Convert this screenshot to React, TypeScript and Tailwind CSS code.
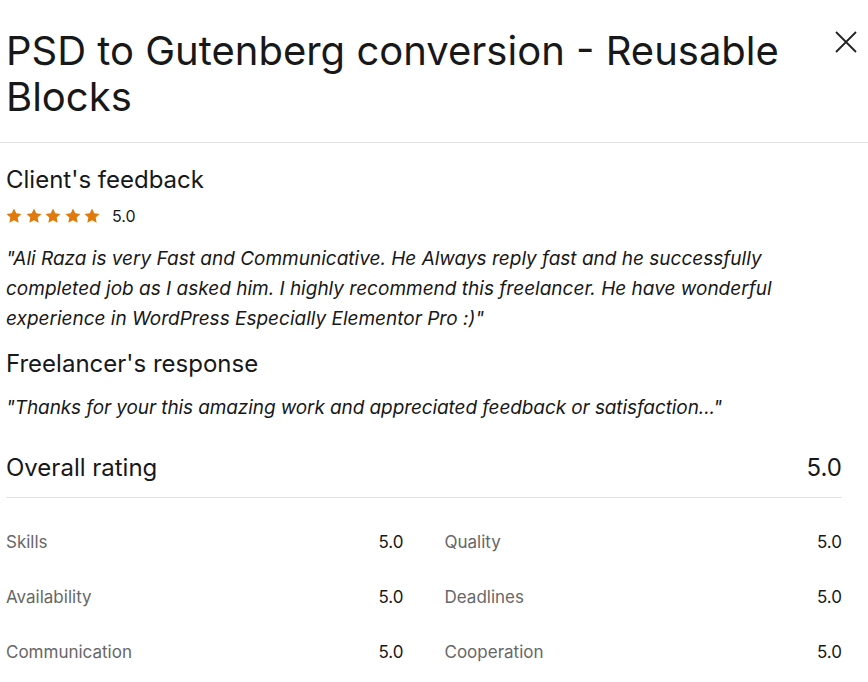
import React from 'react';

const font = { fontFamily: 'Inter, "Liberation Sans", Arial, sans-serif' };

function StarIcon() {
  return (
    <svg viewBox="0 0 24 24" className="w-[16px] h-[16px]" fill="#e07a0c">
      <path d="M12 .8l3.4 7.1 7.8 1-5.7 5.4 1.5 7.7L12 18.2 5 22l1.5-7.7L.8 8.9l7.8-1z" />
    </svg>
  );
}

const scores: [string, string][] = [
  ['Skills', 'Quality'],
  ['Availability', 'Deadlines'],
  ['Communication', 'Cooperation'],
];

export default function App() {
  return (
    <div className="w-[868px] h-[682px] bg-white overflow-hidden text-[#181818]" style={font}>
      {/* Header */}
      <div className="flex justify-between items-start pl-[6px] pr-[10px] pt-[28px] pb-[22px] border-b border-[#e4e4e4]">
        <h1 className="text-[40px] leading-[46px] max-w-[800px]">
          PSD to Gutenberg conversion - Reusable Blocks
        </h1>
        <button className="w-[24px] h-[24px] mt-[2px] text-[#222]">
          <svg viewBox="0 0 24 24" className="w-[24px] h-[24px]" stroke="currentColor" strokeWidth="1.8" fill="none">
            <path d="M2 2l20 20M22 2L2 22" />
          </svg>
        </button>
      </div>

      <div className="pl-[6px] pr-[26px]">
        {/* Client feedback */}
        <h2 className="text-[24px] leading-[30px] mt-[22px]">Client's feedback</h2>
        <div className="flex items-center mt-[11px]">
          <div className="flex gap-[3.5px]">
            <StarIcon />
            <StarIcon />
            <StarIcon />
            <StarIcon />
            <StarIcon />
          </div>
          <span className="ml-[12px] text-[16px] leading-[20px]">5.0</span>
        </div>
        <p className="italic text-[19px] leading-[30px] mt-[18px] max-w-[800px]">
          "Ali Raza is very Fast and Communicative. He Always reply fast and he successfully completed job as I asked him. I highly recommend this freelancer. He have wonderful experience in WordPress Especially Elementor Pro :)"
        </p>

        {/* Freelancer response */}
        <h2 className="text-[24px] leading-[30px] mt-[15px]">Freelancer's response</h2>
        <p className="italic text-[19px] leading-[30px] mt-[14px] tracking-[-0.1px]">
          "Thanks for your this amazing work and appreciated feedback or satisfaction..."
        </p>

        {/* Overall */}
        <div className="flex justify-between items-center mt-[30px] pb-[14px] border-b border-[#e4e4e4]">
          <span className="text-[24px] leading-[30px]">Overall rating</span>
          <span className="text-[24px] leading-[30px]">5.0</span>
        </div>

        <div className="grid grid-cols-2 gap-x-[41px] mt-[17px]">
          {scores.map(([a, b]) => (
            <React.Fragment key={a}>
              <div className="flex justify-between items-center h-[55px] text-[17px]">
                <span className="text-[#676767]">{a}</span>
                <span>5.0</span>
              </div>
              <div className="flex justify-between items-center h-[55px] text-[17px]">
                <span className="text-[#676767]">{b}</span>
                <span>5.0</span>
              </div>
            </React.Fragment>
          ))}
        </div>
      </div>
    </div>
  );
}
